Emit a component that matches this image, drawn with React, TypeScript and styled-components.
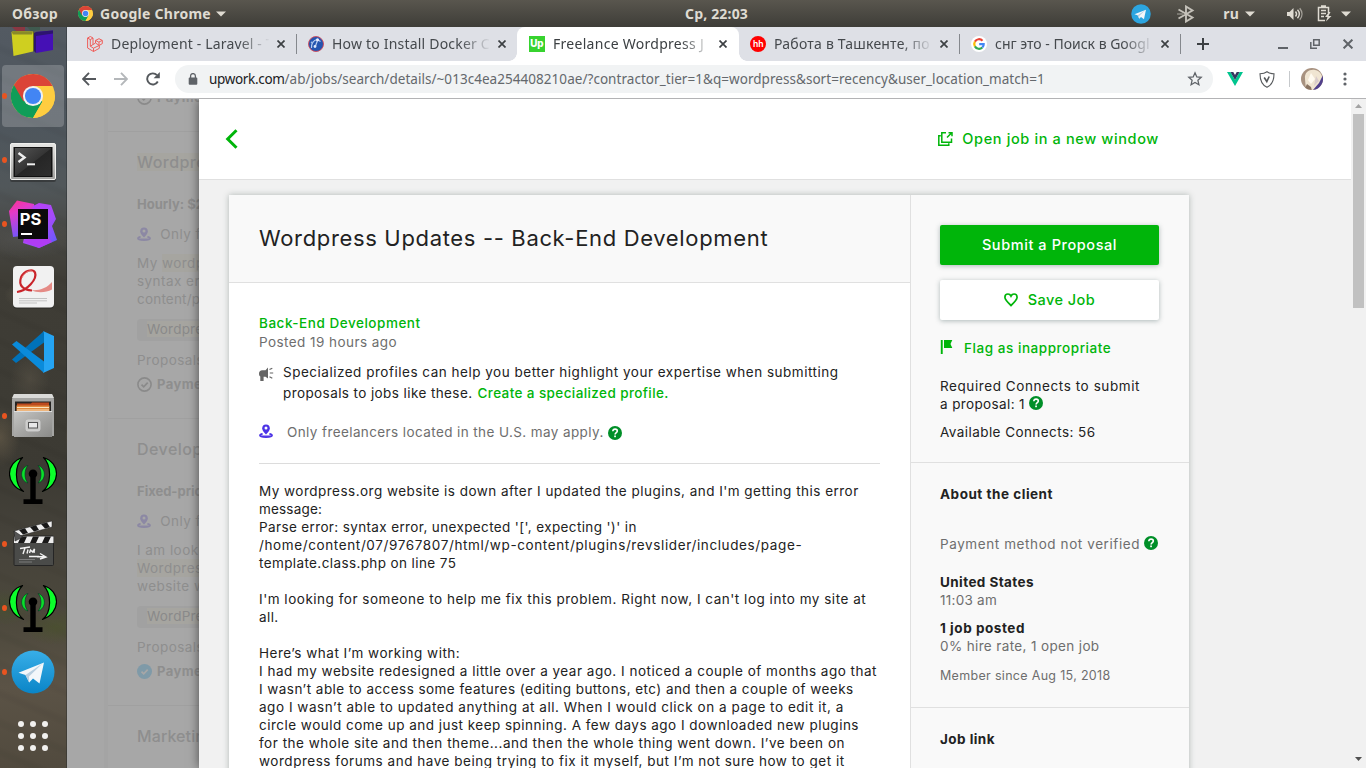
import React from "react";
import styled, { createGlobalStyle } from "styled-components";

const GlobalStyle = createGlobalStyle`
  *, *::before, *::after { box-sizing: border-box; }
  html, body { margin: 0; height: 768px; overflow: hidden; background: #f1f1f1; }
  body { font-family: Inter, "Liberation Sans", sans-serif; }
  svg { display: block; flex: none; }
`;

const uiFont = `"Noto Sans", "Open Sans", sans-serif`;
const green = "#00b50a";

/* ---------- Desktop ---------- */

const Desktop = styled.div`
  width: 1366px;
  height: 768px;
  overflow: hidden;
  display: flex;
  flex-direction: column;
`;

const TopBar = styled.header`
  height: 27px;
  flex: none;
  display: flex;
  align-items: center;
  background: linear-gradient(#59564e, #3e3d38);
  color: #dfdbd2;
  font: 700 14px/27px ${uiFont};
`;

const BarLeft = styled.div`
  display: flex;
  align-items: center;
  width: 685px;
  padding-left: 12px;
`;

const BarRight = styled.div`
  display: flex;
  align-items: center;
  margin-left: auto;
  padding-right: 15px;
`;

const BarText = styled.span<{ $ls: number; $ml?: number }>`
  letter-spacing: ${(p) => p.$ls}px;
  margin-left: ${(p) => p.$ml ?? 0}px;
  white-space: nowrap;
`;

const Slot = styled.span<{ $ml: number }>`
  display: flex;
  margin-left: ${(p) => p.$ml}px;
`;

const Workspace = styled.div`
  display: flex;
  height: 741px;
`;

/* ---------- Dock ---------- */

const Dock = styled.nav`
  width: 67px;
  flex: none;
  display: flex;
  flex-direction: column;
  border-right: 1px solid rgba(30, 34, 36, 0.35);
  background:
    radial-gradient(ellipse 26px 14px at 30px 268px, rgba(98, 90, 76, 0.8), transparent),
    radial-gradient(ellipse 60px 20px at 20px 212px, rgba(82, 82, 80, 0.7), transparent),
    radial-gradient(ellipse 20px 24px at 30px 352px, rgba(88, 82, 70, 0.6), transparent),
    radial-gradient(ellipse 20px 30px at 0px 410px, rgba(100, 90, 72, 0.7), transparent),
    radial-gradient(ellipse 34px 18px at 56px 600px, rgba(74, 84, 42, 0.6), transparent),
    radial-gradient(ellipse 26px 18px at 6px 580px, rgba(70, 84, 44, 0.55), transparent),
    repeating-linear-gradient(23deg, transparent 0 9px, rgba(0, 0, 0, 0.03) 13px 16px, transparent 20px 27px),
    linear-gradient(#535a62 0, #4e565d 90px, #51575a 160px, #464642 210px, #3f3d36 250px, #3c3a33 440px, #45423a 510px, #4c483c 590px, #5b5346 660px, #514a3e 741px);
`;

const DockItem = styled.div<{ $active?: boolean; $first?: boolean }>`
  height: ${(p) => (p.$first ? 37 : 64)}px;
  flex: none;
  position: relative;
  display: flex;
  align-items: ${(p) => (p.$first ? "flex-start" : "center")};
  justify-content: center;
  &::before {
    content: "";
    position: absolute;
    display: ${(p) => (p.$active ? "block" : "none")};
    inset: 1px 2px 1px 2px;
    border-radius: 4px;
    background: rgba(255, 255, 255, 0.2);
  }
  svg { position: relative; }
`;

const RunningDot = styled.i`
  position: absolute;
  left: 2px;
  top: 29px;
  width: 5px;
  height: 6px;
  border-radius: 50%;
  background: #e95420;
`;

/* ---------- Browser ---------- */

const Browser = styled.section`
  width: 1299px;
  flex: none;
  display: flex;
  flex-direction: column;
  background: #fff;
`;

const TabStrip = styled.div`
  height: 34px;
  flex: none;
  display: flex;
  padding-left: 8px;
  background: #dee0e6;
`;

const Tab = styled.div<{ $active?: boolean; $divider?: boolean }>`
  width: ${(p) => (p.$active ? 222 : 221)}px;
  margin-right: ${(p) => (p.$active ? -1 : 0)}px;
  position: relative;
  display: flex;
  align-items: center;
  padding-left: 12px;
  color: ${(p) => (p.$active ? "#3c4043" : "#45494d")};
  background: ${(p) => (p.$active ? "#fff" : "transparent")};
  border-radius: 8px 8px 0 0;
  &::before {
    content: "";
    position: absolute;
    display: ${(p) => (p.$active ? "block" : "none")};
    left: -8px;
    right: -8px;
    bottom: 0;
    height: 8px;
    background:
      radial-gradient(circle at 0 0, transparent 7.5px, #fff 8px) left / 8px 8px no-repeat,
      radial-gradient(circle at 100% 0, transparent 7.5px, #fff 8px) right / 8px 8px no-repeat;
  }
  &::after {
    content: "";
    position: absolute;
    display: ${(p) => (p.$divider ? "block" : "none")};
    right: -1px;
    top: 7px;
    width: 1px;
    height: 20px;
    background: #85888d;
  }
`;

const TabTitle = styled.span<{ $ls: number }>`
  width: 158px;
  margin: 0 6px 0 8px;
  overflow: hidden;
  white-space: nowrap;
  font: 400 14px/20px ${uiFont};
  letter-spacing: ${(p) => p.$ls}px;
  mask-image: linear-gradient(90deg, #000 128px, transparent 159px);
`;

const StripActions = styled.div`
  flex: 1;
  display: flex;
  align-items: center;
  padding-left: 17px;
`;

const Toolbar = styled.div`
  height: 37px;
  flex: none;
  display: flex;
  align-items: center;
  padding: 0 0 1px 14px;
  background: #fff;
`;

const Omnibox = styled.div`
  width: 1038px;
  height: 28px;
  margin-left: 15px;
  padding: 0 10px 0 13px;
  display: flex;
  align-items: center;
  border-radius: 14px;
  background: #f1f3f4;
  font: 400 13.5px/28px ${uiFont};
  color: #64686c;
  white-space: nowrap;
`;

const Host = styled.span`
  margin-left: 11px;
  letter-spacing: -0.33px;
  color: #202124;
`;

const Path = styled.span`
  flex: 1;
  letter-spacing: 0.045px;
`;

const Viewport = styled.div`
  height: 670px;
  flex: none;
  display: flex;
  border-top: 1px solid #b3b3b5;
  overflow: hidden;
`;

/* ---------- Dimmed page behind the panel ---------- */

const Backdrop = styled.aside`
  width: 132px;
  flex: none;
  overflow: hidden;
  padding-left: 37px;
  background: #a7a7a7;
`;

const FeedColumn = styled.div`
  width: 200px;
  height: 700px;
  border-left: 4px solid #a4a4a4;
`;

const FeedCard = styled.article<{ $h: number }>`
  height: ${(p) => p.$h}px;
  padding-left: 29px;
  border-bottom: 1px solid #a0a0a0;
  display: flex;
  flex-direction: column;
  align-items: flex-start;
`;

const FeedLine = styled.div<{ $mt?: number; $bold?: boolean; $big?: boolean; $ls?: number }>`
  display: flex;
  align-items: center;
  flex: none;
  height: 18px;
  margin-top: ${(p) => p.$mt ?? 0}px;
  font-size: ${(p) => (p.$big ? 16 : p.$bold ? 13 : 13.5)}px;
  font-weight: ${(p) => (p.$bold ? 700 : p.$big ? 500 : 400)};
  letter-spacing: ${(p) => p.$ls ?? 0.45}px;
  line-height: 18px;
  white-space: nowrap;
  color: #8e8e8e;
  svg { margin-right: 5px; }
`;

const Mark = styled.mark`
  color: inherit;
  background: #a6a5a0;
`;

const Tag = styled.div`
  height: 22px;
  flex: none;
  margin-top: 11px;
  padding: 0 10px;
  border-radius: 4px;
  background: #a1a1a1;
  color: #8a8a8a;
  font-size: 13.5px;
  line-height: 20px;
  letter-spacing: 0.2px;
`;

/* ---------- Job panel ---------- */

const Panel = styled.main`
  width: 1152px;
  flex: none;
  position: relative;
  display: flex;
  flex-direction: column;
  background: #f1f1f1;
  box-shadow: 0 0 10px rgba(0, 0, 0, 0.55);
`;

const PanelHead = styled.div`
  height: 81px;
  flex: none;
  display: flex;
  align-items: center;
  justify-content: space-between;
  padding: 0 192px 1px 26px;
  background: #fff;
  border-bottom: 1px solid #e0e0e0;
`;

const OpenLink = styled.a`
  display: flex;
  align-items: center;
  gap: 9px;
  font-size: 14.5px;
  font-weight: 550;
  letter-spacing: 0.63px;
  color: ${green};
`;

const JobCard = styled.article`
  width: 960px;
  height: 620px;
  flex: none;
  margin: 15px 0 0 30px;
  display: flex;
  background: #fff;
  box-shadow: 0 0 6px rgba(60, 80, 75, 0.36);
`;

const JobMain = styled.div`
  width: 681px;
  flex: none;
`;

const JobHeader = styled.div`
  height: 88px;
  padding: 30px 30px 0;
  background: #f9f9f9;
  border-bottom: 1px solid #e0e0e0;
`;

const JobTitle = styled.h1`
  margin: 0;
  font-size: 22px;
  line-height: 26px;
  font-weight: 400;
  letter-spacing: 0.66px;
  color: #222;
  white-space: nowrap;
`;

const JobBody = styled.div`
  padding: 31px 30px 0;
`;

const Line = styled.div<{
  $ls?: number; $mt?: number; $h?: number; $tone?: "muted" | "green"; $weight?: number; $size?: number;
}>`
  display: flex;
  align-items: center;
  height: ${(p) => p.$h ?? 18}px;
  margin-top: ${(p) => p.$mt ?? 0}px;
  font-size: ${(p) => p.$size ?? 13.5}px;
  line-height: ${(p) => p.$h ?? 18}px;
  font-weight: ${(p) => p.$weight ?? 400};
  letter-spacing: ${(p) => p.$ls ?? 0.5}px;
  color: ${(p) => (p.$tone === "muted" ? "#6e6e6e" : p.$tone === "green" ? green : "#222")};
  white-space: pre;
`;

const InlineLink = styled.a`
  margin-left: 5px;
  font-weight: 550;
  letter-spacing: 0.4px;
  color: ${green};
`;

const Notice = styled.div`
  display: flex;
  gap: 9px;
  margin-top: 11px;
  > svg { margin-top: 5px; }
`;

const Rule = styled.hr`
  height: 1px;
  margin: 22px 0 18px;
  border: 0;
  background: #dcdcdc;
`;

const Side = styled.div`
  flex: 1;
  background: #f9f9f9;
  border-left: 1px solid #e0e0e0;
`;

const SideBlock = styled.section<{ $h: number; $pt: number }>`
  height: ${(p) => p.$h}px;
  padding: ${(p) => p.$pt}px 30px 0 29px;
  border-bottom: 1px solid #e0e0e0;
`;

const Button = styled.button<{ $primary?: boolean }>`
  width: 219px;
  height: 40px;
  margin: 0 0 15px;
  padding: 0 0 2px;
  border: 0;
  border-radius: 2px;
  display: flex;
  align-items: center;
  justify-content: center;
  gap: 10px;
  font: 550 14.5px Inter, sans-serif;
  letter-spacing: ${(p) => (p.$primary ? 0.58 : 0.44)}px;
  color: ${(p) => (p.$primary ? "#fff" : green)};
  background: ${(p) => (p.$primary ? green : "#fff")};
  box-shadow: 0 1px 5px rgba(50, 80, 80, 0.38);
  svg { margin-top: 2px; }
`;

const Glyph = styled.span<{ $dy?: number; $ml?: number }>`
  display: inline-flex;
  margin: ${(p) => p.$dy ?? 0}px 0 0 ${(p) => p.$ml ?? 4}px;
`;

const Scrollbar = styled.div`
  width: 15px;
  flex: none;
  display: flex;
  flex-direction: column;
  align-items: center;
  background: #f1f1f1;
  z-index: 1;
`;

const Thumb = styled.div`
  width: 11px;
  height: 194px;
  margin: 5px 0 auto;
  background: #c1c1c1;
`;

/* ---------- Icons ---------- */

const ChromeLogo = ({ size }: { size: number }) => (
  <svg width={size} height={size} viewBox="0 0 48 48">
    <circle cx="24" cy="24" r="24" fill="#ffcd40" />
    <path d="M24 24 3.2 12A24 24 0 0 0 24 48l10.4-18z" fill="#0f9d58" />
    <path d="M24 13h21.3A24 24 0 0 0 3.2 12l10.4 18z" fill="#db4437" />
    <path d="M24 24H48A24 24 0 0 1 24 48l10.4-18z" fill="#ffcd40" />
    <circle cx="24" cy="24" r="11" fill="#f1f1f1" />
    <circle cx="24" cy="24" r="8.8" fill="#4285f4" />
  </svg>
);

const Cubes = () => (
  <svg width="48" height="32" viewBox="0 0 48 32">
    <path d="M3 0h13v4l-8 1z" fill="#8a3742" />
    <path d="M18 0h13v3l-9 1z" fill="#3f5a4f" />
    <path d="M2.500 5 5 4l19 .5v20L4.500 29z" fill="#cfcf20" />
    <path d="M2.500 5 5 4l19 .5-1 3H4z" fill="#8a8a28" />
    <path d="M24 24.500 26 23V6l-2-1.500z" fill="#6b6b18" />
    <path d="M27 5 44 3.500V23L27 26z" fill="#4510b5" />
    <path d="M25 6l2-1v21l-2-2zM27 5l17-1.500v3L27 9z" fill="#2d1470" />
  </svg>
);

const TerminalIcon = () => (
  <svg width="48" height="48" viewBox="0 0 48 48">
    <defs>
      <linearGradient id="tframe" x2="0" y2="1"><stop stopColor="#e6e6e4" /><stop offset="1" stopColor="#a2a2a0" /></linearGradient>
      <linearGradient id="tscreen" x2="1" y2="1"><stop stopColor="#555" /><stop offset=".5" stopColor="#353535" /><stop offset=".52" stopColor="#262626" /><stop offset="1" stopColor="#2e2e2e" /></linearGradient>
    </defs>
    <rect x="1" y="8" width="46" height="38" rx="2" fill="#222" opacity=".5" />
    <rect x="1.5" y="7.5" width="45" height="36" rx="1.5" fill="url(#tframe)" stroke="#f0f0ee" />
    <rect x="4.5" y="11" width="39" height="30" fill="#111" />
    <rect x="6" y="12" width="36" height="28" fill="url(#tscreen)" />
    <path d="m9.500 17 6 4.500-6 4.500" fill="none" stroke="#eee" strokeWidth="2.400" />
    <path d="M18 28.300h8" stroke="#eee" strokeWidth="2" />
  </svg>
);

const PhpStormIcon = () => (
  <svg width="48" height="48" viewBox="0 0 48 48">
    <defs>
      <linearGradient id="psa" x2=".4" y2="1"><stop stopColor="#fc318c" /><stop offset=".35" stopColor="#e33bc8" /><stop offset="1" stopColor="#6b57ff" /></linearGradient>
      <linearGradient id="psb" x2=".9" y2="1"><stop stopColor="#c33bf5" /><stop offset=".6" stopColor="#a44bfa" /><stop offset="1" stopColor="#5f5dff" /></linearGradient>
    </defs>
    <path d="M0 11 8 .5l17 3.500 4 30L4 37z" fill="url(#psa)" />
    <path d="m24 6 6-3 12 2 5 14-4 7 5 14-18 8-16-5 2-10z" fill="url(#psb)" />
    <path d="m14 41 16 7 13-6-6-8z" fill="#b03cf3" />
    <rect x="9" y="9" width="30" height="30" fill="#0b0a0c" />
    <text x="10.800" y="25" fill="#fff" fontFamily="Inter, sans-serif" fontWeight="700" fontSize="16.500">PS</text>
    <rect x="12" y="33" width="11" height="2" fill="#fff" />
  </svg>
);

const PdfIcon = () => (
  <svg width="48" height="48" viewBox="0 0 48 48">
    <rect x="4" y="3" width="41" height="42" rx="4" fill="#222" opacity=".4" />
    <rect x="4" y="2" width="41" height="41.500" rx="4" fill="#f1f1f1" />
    <path d="M22 26c8 1 16-2 21-8v7.500c-6 3-14 4-21 .5z" fill="#e58b86" />
    <path d="M8 28C18 27 28.500 15 26 8.500 24 4.500 15 6 12 13.500 9 22 15 26 23 26.500" fill="none" stroke="#c9242a" strokeWidth="2.200" />
    <path d="M13 14C16 7 23 5 25 9" fill="none" stroke="#ee8a86" strokeWidth="1" />
    <path d="M10 34.500h28M10 36.800h28M10 39h18" stroke="#c3c3c3" strokeWidth="1" />
  </svg>
);

const VsCodeIcon = () => (
  <svg width="48" height="48" viewBox="0 0 48 48">
    <path d="M3 31.500 7 35l28-20.500V3z" fill="#0072ba" />
    <path d="M3 16.500 7.500 13 35 33.500V45z" fill="#0a8bdb" />
    <path d="M34 45c.8-.8 1-2 1-3V6c0-1-.2-2.500-1-3l11 5v32z" fill="#25a4f3" />
  </svg>
);

const FilesIcon = () => (
  <svg width="48" height="48" viewBox="0 0 48 48">
    <defs><linearGradient id="fl" x2="1" y2="1"><stop stopColor="#c4c4c2" /><stop offset=".5" stopColor="#a6a6a4" /><stop offset="1" stopColor="#8a8a88" /></linearGradient></defs>
    <path d="M5 2h38l2 5v37H3V7z" fill="#a5a5a3" />
    <path d="M5 2h38l2 4H3z" fill="#dadad8" />
    <rect x="6" y="9.500" width="36" height="12" fill="#262422" />
    <path d="M8 11.500h14l1-1h17v4H8z" fill="#bd4a1e" />
    <path d="M7.500 13.500h33V20h-33z" fill="#e0883c" />
    <path d="M8 15.500h32M8 18h32" stroke="#fbe3bd" strokeWidth="1" />
    <path d="M5 20h38v25H5z" fill="url(#fl)" />
    <path d="M5 19.500h38" stroke="#dedede" strokeWidth="1" />
    <rect x="17" y="28" width="14" height="11" rx="2" fill="#c9c9c7" stroke="#d8d8d8" strokeWidth=".8" />
    <rect x="19.500" y="30.500" width="9" height="5.500" fill="#e8e8e8" stroke="#555" />
  </svg>
);

const AntennaIcon = () => (
  <svg width="48" height="48" viewBox="0 0 48 48">
    <g fill="#0bff2b" stroke="#000" strokeWidth="1.200" strokeLinejoin="round">
      <path d="M13.500 1.500C-4 7-4 29 14.500 35.500 5.500 29 5 10 13.500 1.500z" />
      <path d="M34.500 1.500C52 7 52 29 33.500 35.500 42.500 29 43 10 34.500 1.500z" />
    </g>
    <g fill="#0be02b" stroke="#032" strokeWidth=".6">
      <path d="M19 9.500c-8.500 2.500-8.500 15 0 17.500-4-4-4-13.500 0-17.500z" />
      <path d="M29 9.500c8.500 2.500 8.500 15 0 17.500 4-4 4-13.500 0-17.500z" />
    </g>
    <circle cx="24" cy="17.800" r="4.300" />
    <path d="M21.300 18h5.400v25.300h6.800V48h-19v-4.700h6.800z" />
  </svg>
);

const ClapperIcon = () => (
  <svg width="48" height="48" viewBox="0 0 48 48">
    <rect x="5" y="16" width="39.500" height="29.500" rx="1" fill="#4a4b49" stroke="#252525" />
    <path d="M5 11 43 1v6L7 17z" fill="#eee" stroke="#222" strokeWidth=".5" />
    <path d="m10 10 6-1.700 3 4.800-5 1.400zM21 7l6-1.700 3 4.800-5 1.400zM32 4l6-1.500 3 4.700-5 1.300z" fill="#191919" />
    <path d="M5 16.500h39.500V23H5z" fill="#eee" />
    <path d="m12 16.500 6 0-3 6.500H9zM24 16.500h6L27 23h-6zM36 16.500h6L39 23h-6z" fill="#191919" />
    <path d="m5 11 9 6-8 4z" fill="#555" stroke="#222" strokeWidth=".6" />
    <path d="m11 28.500 10-1.500M16 28l-2 6M19 29.500l-1 4M20.500 33l1-3 2 2 2-3-.5 4M20 36.500h10M31 33.500l6 3.500-6 2M28 36.800h8" stroke="#f2f2f2" strokeWidth="1.400" fill="none" />
    <path d="M10 39.500h16M10 42h13" stroke="#888" strokeWidth=".8" />
  </svg>
);

const TelegramIcon = ({ size }: { size: number }) => (
  <svg width={size} height={size} viewBox="0 0 44 44">
    <defs><linearGradient id="tg" x2="0" y2="1"><stop stopColor="#38aee8" /><stop offset="1" stopColor="#0a85c7" /></linearGradient></defs>
    <circle cx="22" cy="22" r="21.500" fill={size > 30 ? "url(#tg)" : "#2ca5e0"} />
    <path d="M7.500 22.800 33 12.500 28.500 33.500l-6.500-5-3.800 4L14.500 25z" fill="#f3f7fa" />
    <path d="m14.500 25 17-11.500L18 26.500l.2 6z" fill="#b9cfe0" />
  </svg>
);

const AppsIcon = () => (
  <svg width="30" height="30" viewBox="0 0 30 30" fill="#f2f1ef">
    {[3, 15, 27].map((y) => [3, 15, 27].map((x) => <circle key={`${x}-${y}`} cx={x} cy={y} r="3" />))}
  </svg>
);

const Caret = () => (
  <svg width="10" height="6" viewBox="0 0 10 6" fill="#dfdbd2"><path d="M0 .5h10L5 5.500z" /></svg>
);

const BluetoothIcon = () => (
  <svg width="18" height="18" viewBox="0 0 18 18" fill="none" stroke="#c4c1b9" strokeWidth="1.900">
    <path d="M1.500 4.500 15.500 12.500 9 16.500V1.500l6.500 4L1.500 13.500" /><path d="M0 9h6" strokeWidth="1.300" opacity=".6" />
  </svg>
);

const VolumeIcon = () => (
  <svg width="16" height="14" viewBox="0 0 16 14" fill="none" stroke="#dfdbd2" strokeWidth="1.400">
    <path d="M0 5h2.500L6.500 1v12L2.500 9H0z" fill="#dfdbd2" stroke="none" />
    <path d="M8.500 4.500c1.300 1.500 1.300 3.500 0 5M10.500 2.800c2.200 2.500 2.200 5.900 0 8.400" /><path d="M12.700 1.200c3 3.500 3 8.100 0 11.600" opacity=".6" />
  </svg>
);

const BatteryIcon = () => (
  <svg width="15" height="17" viewBox="0 0 15 17" fill="none" stroke="#dfdbd2" strokeWidth="1.500">
    <path d="M8 15.500H1.500v-13h10V8M4 1h5M4 5.500h5M4 8.500h5M4 11.500h3" /><path d="m12 7-4 5h2.500L9 16.500l5.500-5.500h-3L13.500 7z" fill="#dfdbd2" stroke="none" />
  </svg>
);

const CloseGlyph = ({ size = 8, w = 1.700, c = "#3c4043" }: { size?: number; w?: number; c?: string }) => (
  <svg width={size} height={size} viewBox="0 0 8 8" stroke={c} strokeWidth={w}><path d="m.5.5 7 7m0-7-7 7" /></svg>
);

const LaravelIcon = () => (
  <svg width="16" height="16" viewBox="0 0 16 16" fill="none" stroke="#ef5e5a" strokeWidth="1">
    <path d="m.6 2 2.700-1.500L6 2v6.500l2.500-1.400V4.400L12 2.700l3.300 1.700v3.200l-3 1.800v2.900L6.500 15.500.6 12zM.6 2l2.700 1.600L6 2M3.300 3.600v6.600l3.200 2 5.800-2.800-3.300-2M6.500 12.200v3.300M8.600 4.400l3.200 1.700 3.400-1.700M12 6.100v3.200M3.300 10.200 6 8.500" />
  </svg>
);

const DigiIcon = () => (
  <svg width="16" height="16" viewBox="0 0 16 16">
    <circle cx="8" cy="8" r="7.500" fill="#2455b0" stroke="#d1495a" strokeWidth=".9" />
    <path d="M3.500 12C3 8.500 5 4.500 9 3.500M9.500 4.500 7.500 10M10 4l2.500 1.500" stroke="#b9cef0" strokeWidth="1.200" fill="none" />
    <circle cx="9.500" cy="3.800" r="1.500" fill="#eef" /><circle cx="7" cy="10.500" r="1.400" fill="#dde8fb" /><circle cx="3.800" cy="6.500" r="1.100" fill="#9dbbe8" />
  </svg>
);

const UpworkIcon = () => (
  <svg width="16" height="16" viewBox="0 0 16 16">
    <rect width="16" height="16" fill="#37d32f" />
    <text x="1.200" y="11.300" fill="#fff" fontFamily="Inter, sans-serif" fontWeight="800" fontSize="9.800">Up</text>
  </svg>
);

const HhIcon = () => (
  <svg width="16" height="16" viewBox="0 0 16 16">
    <circle cx="8" cy="8" r="8" fill="#f00" />
    <text x="3" y="11.300" fill="#fff" fontFamily="Inter, sans-serif" fontWeight="600" fontSize="8.700">hh</text>
  </svg>
);

const GoogleIcon = () => (
  <svg width="16" height="16" viewBox="0 0 16 16" fill="none" strokeWidth="2.200">
    <circle cx="8" cy="8" r="8" fill="#fff" />
    <path d="M11.500 4.700A4.800 4.800 0 0 0 3.900 5.600" stroke="#ea4335" />
    <path d="M3.900 5.600a4.800 4.800 0 0 0 0 4.800" stroke="#fbbc05" />
    <path d="M3.900 10.400a4.800 4.800 0 0 0 7.400 1.100" stroke="#34a853" />
    <path d="M11.300 11.500C12.400 10.500 12.800 9.300 12.700 8.200H8.200" stroke="#4285f4" />
  </svg>
);

const ArrowIcon = ({ flip, color }: { flip?: boolean; color: string }) => (
  <svg width="14" height="14" viewBox="0 0 14 14" fill="none" stroke={color} strokeWidth="1.900">
    <path d={flip ? "M0 7h12.500M7 .8 13 7l-6 6.200" : "M14 7H1.500M7 .8 1 7l6 6.200"} />
  </svg>
);

const ReloadIcon = () => (
  <svg width="14" height="14" viewBox="0 0 14 14"><path d="M11.800 9.500A5.600 5.600 0 1 1 11 3.200" fill="none" stroke="#54585c" strokeWidth="1.900" /><path d="M13.800 0v6.200H7.600z" fill="#54585c" /></svg>
);

const LockIcon = () => (
  <svg width="10" height="12" viewBox="0 0 10 12"><rect x=".7" y="4.500" width="8.600" height="7.300" rx="1" fill="#5f6368" /><path d="M2.600 5V3a2.400 2.400 0 0 1 4.800 0v2" fill="none" stroke="#5f6368" strokeWidth="1.300" /></svg>
);

const StarIcon = () => (
  <svg width="16" height="16" viewBox="0 0 16 16" fill="none" stroke="#5f6368" strokeWidth="1.300"><path d="m8 1.800 1.800 4.100 4.400.4-3.300 3 1 4.400L8 11.400l-3.900 2.300 1-4.400-3.300-3 4.400-.4z" /></svg>
);

const VueIcon = () => (
  <svg width="16" height="14" viewBox="0 0 16 14"><path d="M0 0h3.400L8 8l4.600-8H16L8 14z" fill="#00c58e" /><path d="M3.400 0h2.900L8 3l1.700-3h2.900L8 8z" fill="#35375f" /></svg>
);

const ShieldIcon = () => (
  <svg width="16" height="17" viewBox="0 0 16 17" fill="none" stroke="#55585b" strokeWidth="1.100"><path d="M8 .7c2 1.500 4.500 2 7 2 0 6-1.500 11-7 13.600C2.500 13.700 1 8.700 1 2.700c2.500 0 5-.5 7-2z" /><path d="m5.200 6.500 2.600 4L10.200 5.500" strokeWidth="1.600" /></svg>
);

const Avatar = () => (
  <svg width="22" height="22" viewBox="0 0 22 22">
    <defs><clipPath id="av"><circle cx="11" cy="11" r="11" /></clipPath></defs>
    <g clipPath="url(#av)">
      <rect width="22" height="22" fill="#a89280" />
      <path d="M4 11C3 4 9 1 14 2c6 1 8 6 7 12l-7 8H5z" fill="#f0e5d2" />
      <path d="m22 7 1 15H12l6-7z" fill="#51408c" /><path d="m3 22 3-6 4 3 1 4z" fill="#8a7462" />
      <path d="m10 5-3 7 3 4 4-5z" fill="#fffaf0" /><path d="m15 8-2 10 5-5z" fill="#d9cccb" />
    </g>
  </svg>
);

const MenuDots = () => (
  <svg width="4" height="14" viewBox="0 0 4 14" fill="#5f6368"><circle cx="2" cy="2" r="1.600" /><circle cx="2" cy="7" r="1.600" /><circle cx="2" cy="12" r="1.600" /></svg>
);

const PinIcon = ({ color, hole = "#fff" }: { color: string; hole?: string }) => (
  <svg width="14" height="14" viewBox="0 0 14 14" fill="none" stroke={color}>
    <path d="M7 10.500C4.600 8 3.200 6.200 3.200 4.200a3.800 3.800 0 0 1 7.600 0C10.800 6.200 9.400 8 7 10.500z" fill={color} stroke="none" />
    <circle cx="7" cy="4" r="1.500" fill={hole} stroke="none" />
    <path d="M3.600 9.900C1.800 10.200.9 10.900.9 11.600c0 1 2.600 1.600 6.100 1.600s6.100-.6 6.100-1.600c0-.7-.9-1.400-2.700-1.700" strokeWidth="1.600" />
    <path d="M2 12.200h10" strokeWidth="1.400" />
  </svg>
);

const MegaphoneIcon = () => (
  <svg width="15" height="14" viewBox="0 0 15 14" fill="#656565">
    <path d="M9 .5v11L6.500 9.800H4.600V14H1.300V9.600C.4 9 0 8 0 6.800 0 4.500 1.200 3.300 3.300 3.300h3.200z" />
    <path d="M10.800 6h3.400M10.500 2.500l2.800-1.300M10.500 9.800l2.800 1.500" stroke="#656565" strokeWidth="1.200" />
  </svg>
);

const HelpIcon = () => (
  <svg width="14" height="14" viewBox="0 0 14 14">
    <circle cx="7" cy="7" r="7" fill="#008f28" />
    <path d="M4.800 5.300C4.900 3.800 5.800 3.100 7.100 3.100c1.300 0 2.200.8 2.200 1.900 0 1.700-2.200 1.600-2.200 3.500" fill="none" stroke="#fff" strokeWidth="1.600" />
    <rect x="6.200" y="9.500" width="1.700" height="1.700" fill="#fff" />
  </svg>
);

const BackChevron = () => (
  <svg width="13" height="20" viewBox="0 0 13 20" fill="none" stroke={green} strokeWidth="3"><path d="M11.500 1.200 2.700 10l8.800 8.800" /></svg>
);

const OpenIcon = () => (
  <svg width="15" height="14" viewBox="0 0 15 14" fill="none" stroke={green} strokeWidth="1.500">
    <path d="M2.800 3.700H.8v9.500h10v-2" /><path d="M8 .8H3.800v9.500h9.700V6.500" /><path d="M9 5.500 13 1.500M10.500.8H14v3.500" />
  </svg>
);

const HeartIcon = () => (
  <svg width="14" height="14" viewBox="0 0 14 14" fill="none" stroke={green} strokeWidth="1.700"><path d="M7 12.500C3.500 9.300.9 6.800.9 4.300.9 2.300 2.300 1 4 1c1.300 0 2.400.8 3 2 .6-1.200 1.700-2 3-2 1.700 0 3.100 1.300 3.100 3.300 0 2.500-2.600 5-6.100 8.200z" /></svg>
);

const FlagIcon = () => (
  <svg width="13" height="14" viewBox="0 0 13 14" fill={green}><path d="M.8 0h1.900v14H.8zM4 0h8.300l-1.800 4 1.800 4H4z" /></svg>
);

const CheckRing = ({ filled }: { filled?: boolean }) => (
  <svg width="15" height="15" viewBox="0 0 15 15" fill="none">
    <circle cx="7.500" cy="7.500" r={filled ? 7.500 : 6.600} fill={filled ? "#7f9aa8" : "none"} stroke={filled ? "none" : "#8a8a8a"} strokeWidth="1.600" />
    <path d="m4.500 7.600 2.200 2.200 4-4.200" stroke={filled ? "#a7a7a7" : "#8a8a8a"} strokeWidth="1.700" />
  </svg>
);

/* ---------- Content ---------- */

const dockItems: { icon: React.ReactNode; running?: boolean; active?: boolean }[] = [
  { icon: <ChromeLogo size={44} />, running: true, active: true },
  { icon: <TerminalIcon />, running: true },
  { icon: <PhpStormIcon />, running: true },
  { icon: <PdfIcon /> },
  { icon: <VsCodeIcon /> },
  { icon: <FilesIcon />, running: true },
  { icon: <AntennaIcon /> },
  { icon: <ClapperIcon />, running: true },
  { icon: <AntennaIcon />, running: true },
  { icon: <TelegramIcon size={44} />, running: true },
  { icon: <AppsIcon /> },
];

const tabs = [
  { icon: <LaravelIcon />, title: "Deployment - Laravel - T", ls: 0.159, divider: true },
  { icon: <DigiIcon />, title: "How to Install Docker C", ls: 0.199 },
  { icon: <UpworkIcon />, title: "Freelance Wordpress J", ls: 0.28, active: true },
  { icon: <HhIcon />, title: "Работа в Ташкенте, по", ls: 0.215, divider: true },
  { icon: <GoogleIcon />, title: "снг это - Поиск в Googl", ls: -0.007, divider: true },
];

const description: [string, number][] = [
  ["My wordpress.org website is down after I updated the plugins, and I'm getting this error", 0.477],
  ["message:", 0.178],
  ["Parse error: syntax error, unexpected '[', expecting ')' in", 0.367],
  ["/home/content/07/9767807/html/wp-content/plugins/revslider/includes/page-", 0.619],
  ["template.class.php on line 75", 0.39],
  ["", 0],
  ["I'm looking for someone to help me fix this problem. Right now, I can't log into my site at", 0.518],
  ["all.", 0.4],
  ["", 0],
  ["Here’s what I’m working with:", 0.506],
  ["I had my website redesigned a little over a year ago. I noticed a couple of months ago that", 0.502],
  ["I wasn’t able to access some features (editing buttons, etc) and then a couple of weeks", 0.449],
  ["ago I wasn’t able to updated anything at all. When I would click on a page to edit it, a", 0.532],
  ["circle would come up and just keep spinning. A few days ago I downloaded new plugins", 0.481],
  ["for the whole site and then theme...and then the whole thing went down. I’ve been on", 0.515],
  ["wordpress forums and have being trying to fix it myself, but I’m not sure how to get it", 0.527],
];

export default function App() {
  return (
    <Desktop>
      <GlobalStyle />
      <TopBar>
        <BarLeft>
          <BarText $ls={0.316}>Обзор</BarText>
          <Slot $ml={20}><ChromeLogo size={15} /></Slot>
          <BarText $ls={0.27} $ml={7}>Google Chrome</BarText>
          <Slot $ml={5}><Caret /></Slot>
        </BarLeft>
        <BarText $ls={0.163}>Ср, 22:03</BarText>
        <BarRight>
          <TelegramIcon size={20} />
          <Slot $ml={26}><BluetoothIcon /></Slot>
          <BarText $ls={0.2} $ml={28}>ru</BarText>
          <Slot $ml={6}><Caret /></Slot>
          <Slot $ml={32}><VolumeIcon /></Slot>
          <Slot $ml={14}><BatteryIcon /></Slot>
          <Slot $ml={9}><Caret /></Slot>
        </BarRight>
      </TopBar>

      <Workspace>
        <Dock>
          <DockItem $first><Cubes /></DockItem>
          {dockItems.map((item, i) => (
            <DockItem key={i} $active={item.active}>
              {item.running && <RunningDot />}
              {item.icon}
            </DockItem>
          ))}
        </Dock>

        <Browser>
          <TabStrip>
            {tabs.map((t) => (
              <Tab key={t.title} $active={t.active} $divider={t.divider}>
                {t.icon}
                <TabTitle $ls={t.ls}>{t.title}</TabTitle>
                <Slot $ml={2}><CloseGlyph /></Slot>
              </Tab>
            ))}
            <StripActions>
              <svg width="12" height="12" viewBox="0 0 12 12" stroke="#3c4043" strokeWidth="2"><path d="M6 0v12M0 6h12" /></svg>
              <Slot $ml={69}><svg width="10" height="10" viewBox="0 0 10 10"><path d="M0 8h10v2H0z" fill="#5f6368" /></svg></Slot>
              <Slot $ml={22}><svg width="10" height="10" viewBox="0 0 10 10" fill="none" stroke="#5f6368" strokeWidth="1.500"><path d="M3.700.8h5.500v5.500H3.700zM.8 3v6.200H7" /></svg></Slot>
              <Slot $ml={23}><CloseGlyph size={10} w={1.600} c="#5f6368" /></Slot>
            </StripActions>
          </TabStrip>

          <Toolbar>
            <Slot $ml={1}><ArrowIcon color="#54585c" /></Slot>
            <Slot $ml={18}><ArrowIcon flip color="#b4b7ba" /></Slot>
            <Slot $ml={18}><ReloadIcon /></Slot>
            <Omnibox>
              <LockIcon />
              <Host>upwork.com</Host>
              <Path>/ab/jobs/search/details/~013c4ea254408210ae/?contractor_tier=1&amp;q=wordpress&amp;sort=recency&amp;user_location_match=1</Path>
              <StarIcon />
            </Omnibox>
            <Slot $ml={14}><VueIcon /></Slot>
            <Slot $ml={16}><ShieldIcon /></Slot>
            <Slot $ml={14}><svg width="1" height="16"><rect width="1" height="16" fill="#c6c9cc" /></svg></Slot>
            <Slot $ml={11}><Avatar /></Slot>
            <Slot $ml={20}><MenuDots /></Slot>
          </Toolbar>

          <Viewport>
            <Backdrop>
              <FeedColumn>
                <FeedCard $h={33}>
                  <FeedLine $bold $mt={-11}><CheckRing />Payment</FeedLine>
                </FeedCard>
                <FeedCard $h={287}>
                  <FeedLine $big $mt={21}><Mark>Wordpress</Mark></FeedLine>
                  <FeedLine $bold $mt={24} $ls={0}>Hourly: $20</FeedLine>
                  <FeedLine $mt={12}><PinIcon color="#8c88a4" hole="#a7a7a7" />&nbsp;Only free</FeedLine>
                  <FeedLine $mt={11}>My&nbsp;<Mark>wordpress</Mark></FeedLine>
                  <FeedLine>syntax error</FeedLine>
                  <FeedLine $ls={0.2}>content/plug</FeedLine>
                  <Tag><Mark>Wordpress</Mark></Tag>
                  <FeedLine $mt={10}>Proposals</FeedLine>
                  <FeedLine $bold $mt={6}><CheckRing />Payment</FeedLine>
                </FeedCard>
                <FeedCard $h={287}>
                  <FeedLine $big $mt={21}>Developer</FeedLine>
                  <FeedLine $bold $mt={24} $ls={0}>Fixed-price</FeedLine>
                  <FeedLine $mt={12}><PinIcon color="#8c88a4" hole="#a7a7a7" />&nbsp;Only free</FeedLine>
                  <FeedLine $mt={11}>I am looking</FeedLine>
                  <FeedLine><Mark>Wordpress</Mark></FeedLine>
                  <FeedLine>website with</FeedLine>
                  <Tag><Mark>WordPress</Mark></Tag>
                  <FeedLine $mt={10}>Proposals</FeedLine>
                  <FeedLine $bold $mt={6}><CheckRing filled />Payment</FeedLine>
                </FeedCard>
                <FeedCard $h={80}>
                  <FeedLine $big $mt={21} $ls={0.1}>Marketing</FeedLine>
                </FeedCard>
              </FeedColumn>
            </Backdrop>

            <Panel>
              <PanelHead>
                <BackChevron />
                <OpenLink><OpenIcon />Open job in a new window</OpenLink>
              </PanelHead>

              <JobCard>
                <JobMain>
                  <JobHeader>
                    <JobTitle>Wordpress Updates -- Back-End Development</JobTitle>
                  </JobHeader>
                  <JobBody>
                    <Line $tone="green" $weight={550} $ls={0.53}>Back-End Development</Line>
                    <Line $tone="muted" $mt={1} $ls={0.438}>Posted 19 hours ago</Line>
                    <Notice>
                      <MegaphoneIcon />
                      <div>
                        <Line $h={21} $ls={0.509}>Specialized profiles can help you better highlight your expertise when submitting</Line>
                        <Line $h={21} $ls={0.407}>proposals to jobs like these.<InlineLink>Create a specialized profile.</InlineLink></Line>
                      </div>
                    </Notice>
                    <Line $tone="muted" $mt={19} $ls={0.4}>
                      <Glyph $dy={-2} $ml={0}><PinIcon color="#4c33e6" /></Glyph>
                      <Slot $ml={14}>Only freelancers located in the U.S. may apply.</Slot>
                      <Glyph $dy={2}><HelpIcon /></Glyph>
                    </Line>
                    <Rule />
                    {description.map(([text, ls], i) => (
                      <Line key={i} $ls={ls}>{text}</Line>
                    ))}
                  </JobBody>
                </JobMain>

                <Side>
                  <SideBlock $h={268} $pt={30}>
                    <Button $primary>Submit a Proposal</Button>
                    <Button><HeartIcon />Save Job</Button>
                    <Line $tone="green" $weight={550} $mt={19} $ls={0.55}>
                      <Glyph $dy={-2} $ml={0}><FlagIcon /></Glyph>
                      <Slot $ml={11}>Flag as inappropriate</Slot>
                    </Line>
                    <Line $mt={20} $ls={0.576}>Required Connects to submit</Line>
                    <Line $ls={0.375}>a proposal: 1<Glyph $dy={-3}><HelpIcon /></Glyph></Line>
                    <Line $mt={10} $ls={0.432}>Available Connects: 56</Line>
                  </SideBlock>
                  <SideBlock $h={245} $pt={22}>
                    <Line $weight={700} $ls={0.52}>About the client</Line>
                    <Line $tone="muted" $mt={32} $ls={0.59}>Payment method not verified<Glyph $dy={-3}><HelpIcon /></Glyph></Line>
                    <Line $weight={700} $mt={20} $ls={0.415}>United States</Line>
                    <Line $tone="muted" $ls={0.258}>11:03 am</Line>
                    <Line $weight={700} $mt={10} $ls={0.551}>1 job posted</Line>
                    <Line $tone="muted" $ls={0.363}>0% hire rate, 1 open job</Line>
                    <Line $tone="muted" $size={12.5} $mt={12} $ls={0.314}>Member since Aug 15, 2018</Line>
                  </SideBlock>
                  <SideBlock $h={107} $pt={22}>
                    <Line $weight={700} $ls={0.446}>Job link</Line>
                  </SideBlock>
                </Side>
              </JobCard>
            </Panel>

            <Scrollbar>
              <svg width="15" height="10" viewBox="0 0 15 10"><path d="M4 9 7.500 5 11 9z" fill="#a3a3a3" /></svg>
              <Thumb />
              <svg width="15" height="13" viewBox="0 0 15 13"><path d="M4 2h7L7.500 6z" fill="#505050" /></svg>
            </Scrollbar>
          </Viewport>
        </Browser>
      </Workspace>
    </Desktop>
  );
}
